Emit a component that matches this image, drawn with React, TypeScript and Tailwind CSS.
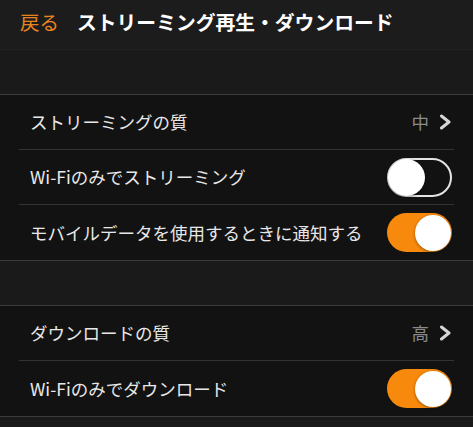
import React, { useState } from "react";

const font = { fontFamily: '"Noto Sans CJK JP", "Noto Sans", sans-serif' };

const Chevron = () => (
    <svg width="13" height="16" viewBox="0 0 13 16" fill="none">
        <polyline points="2.5,2 10,8 2.5,14" stroke="#d6d6d6" strokeWidth="3" strokeLinecap="round" strokeLinejoin="round" />
    </svg>
);

const Toggle = ({ on, onClick }: { on: boolean; onClick: () => void }) => (
    <button
        onClick={onClick}
        className={
            on
                ? "relative flex h-[39px] w-[65px] shrink-0 items-center rounded-full bg-[#f7890c]"
                : "relative flex h-[39px] w-[65px] shrink-0 items-center rounded-full border-2 border-[#e4e4e4] bg-[#121212]"
        }
    >
        <span
            className={
                on
                    ? "absolute right-[1px] top-[1.5px] h-[36px] w-[36px] rounded-full bg-white shadow-[0_1px_3px_rgba(0,0,0,0.4)]"
                    : "absolute left-[-1px] top-[-1px] h-[37px] w-[37px] rounded-full bg-white shadow-[0_1px_3px_rgba(0,0,0,0.4)]"
            }
        />
    </button>
);

const Row = ({ label, children, last }: { label: string; children: React.ReactNode; last?: boolean }) => (
    <div className="px-[19px]">
        <div
            className={
                last
                    ? "flex h-[55px] items-center justify-between pl-[11px] pr-[2px]"
                    : "flex h-[55px] items-center justify-between border-b border-[#333333] pl-[11px] pr-[2px]"
            }
        >
            <span className="text-[17.5px] leading-none text-[#e8e8e8]">{label}</span>
            {children}
        </div>
    </div>
);

const Value = ({ text }: { text: string }) => (
    <div className="flex items-center gap-[10px] pr-[0px]">
        <span className="text-[17.5px] leading-none text-[#8a8a8a]">{text}</span>
        <Chevron />
    </div>
);

export default function App() {
    const [wifiStream, setWifiStream] = useState(false);
    const [notify, setNotify] = useState(true);
    const [wifiDownload, setWifiDownload] = useState(true);

    return (
        <div className="h-[427px] w-[473px] overflow-hidden bg-[#1a1a1a]" style={font}>
            <div className="flex h-[49px] items-start gap-[18px] bg-[#1c1c1c] pl-[20px] pt-[8px]">
                <span className="text-[19.5px] leading-[28px] text-[#e8841f]">戻る</span>
                <span className="text-[19.8px] font-bold leading-[28px] text-white">ストリーミング再生・ダウンロード</span>
            </div>
            <div className="h-[45px] border-t border-[#202020]" />
            <div className="border-y border-[#3c3c3c] bg-[#121212]">
                <Row label="ストリーミングの質">
                    <Value text="中" />
                </Row>
                <Row label="Wi-Fiのみでストリーミング">
                    <Toggle on={wifiStream} onClick={() => setWifiStream(!wifiStream)} />
                </Row>
                <Row label="モバイルデータを使用するときに通知する" last>
                    <Toggle on={notify} onClick={() => setNotify(!notify)} />
                </Row>
            </div>
            <div className="h-[44px]" />
            <div className="border-y border-[#3c3c3c] bg-[#121212]">
                <Row label="ダウンロードの質">
                    <Value text="高" />
                </Row>
                <Row label="Wi-Fiのみでダウンロード" last>
                    <Toggle on={wifiDownload} onClick={() => setWifiDownload(!wifiDownload)} />
                </Row>
            </div>
        </div>
    );
}
